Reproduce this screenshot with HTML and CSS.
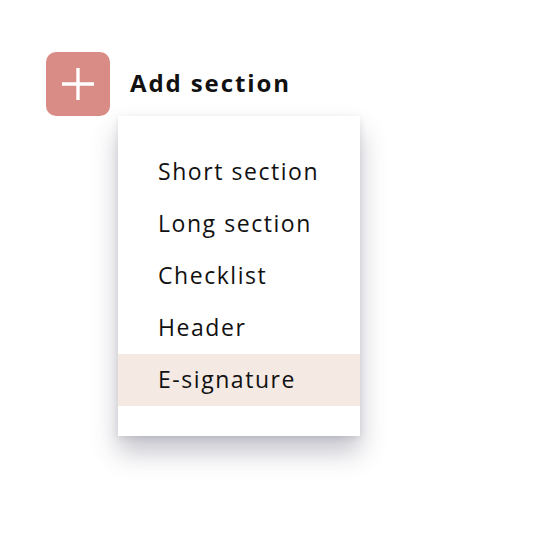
FILE: index.html
```html
<!DOCTYPE html>
<html>
<head>
<meta charset="utf-8">
<link rel="stylesheet" href="styles.css">
</head>
<body>
<div class="wrap">
  <div class="trigger">
    <div class="add-btn">
      <svg width="32" height="32" viewBox="0 0 32 32"><path d="M16 0V32M0 16H32" stroke="#fff" stroke-width="3.4" fill="none"/></svg>
    </div>
    <span class="add-label">Add section</span>
  </div>
  <ul class="menu">
    <li class="item">Short section</li>
    <li class="item">Long section</li>
    <li class="item">Checklist</li>
    <li class="item">Header</li>
    <li class="item active">E-signature</li>
  </ul>
</div>
</body>
</html>
```
FILE: styles.css
```css
html, body {
  margin: 0;
  padding: 0;
  background: #fff;
}
body {
  font-family: "Open Sans", "Liberation Sans", sans-serif;
  color: #111;
  min-height: 534px;
}
.wrap {
  padding: 52px 0 100px 46px;
}
.trigger {
  display: flex;
  align-items: center;
  gap: 20px;
}
.add-btn {
  width: 64px;
  height: 64px;
  border-radius: 10px;
  background: #d98b85;
  display: flex;
  align-items: center;
  justify-content: center;
}
.add-label {
  font-size: 24px;
  font-weight: 700;
  letter-spacing: 1.9px;
  line-height: 30px;
  margin-top: -2px;
}
.menu {
  list-style: none;
  margin: 0 0 0 72px;
  padding: 30px 0;
  width: 242px;
  background: #fff;
  box-shadow: 0 16px 24px rgba(60, 60, 85, 0.3), 0 2px 6px rgba(60, 60, 85, 0.12);
}
.item {
  height: 52px;
  line-height: 50px;
  padding-left: 40px;
  font-size: 23px;
  font-weight: 500;
  letter-spacing: 1.55px;
}
.item.active {
  background: #f5e9e4;
}
```
